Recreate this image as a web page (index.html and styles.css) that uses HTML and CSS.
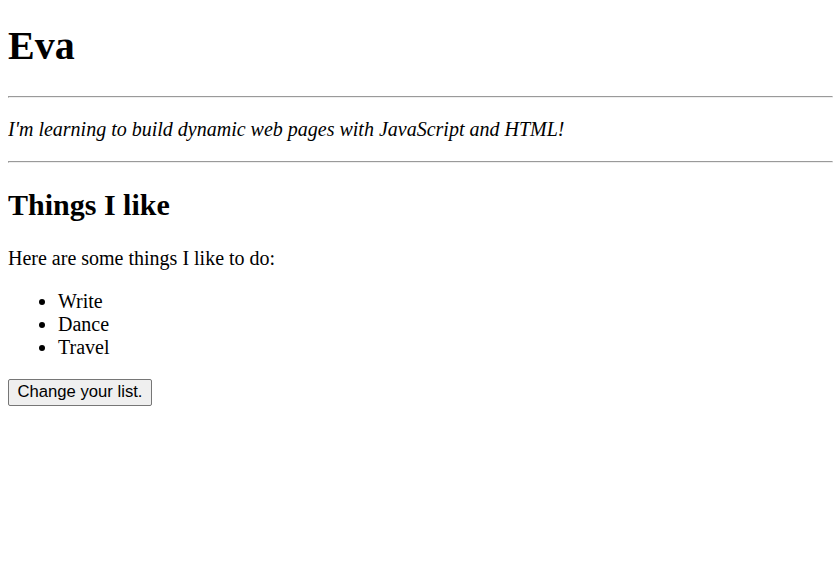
FILE: index.html
```html
<!DOCTYPE html>
<html>
<head>
<meta charset="utf-8">
<link rel="stylesheet" href="styles.css">
</head>
<body class="page">
<h1 class="title">Eva</h1>
<hr class="rule">
<p class="intro"><em>I'm learning to build dynamic web pages with JavaScript and HTML!</em></p>
<hr class="rule">
<h2 class="subtitle">Things I like</h2>
<p class="text">Here are some things I like to do:</p>
<ul class="list">
<li>Write</li>
<li>Dance</li>
<li>Travel</li>
</ul>
<button class="btn">Change your list.</button>
</body>
</html>
```
FILE: styles.css
```css
.page {
  margin: 0 0 10px 8px;
  font-family: "Liberation Serif", "Times New Roman", serif;
  font-size: 20px;
  color: #000;
  background: #fff;
}
.title {
  font-size: 40px;
  margin: 22px 0 26.8px;
}
.rule {
  margin: 10px 0;
  border: 1px inset;
  color: gray;
}
.intro,
.text {
  margin: 20px 0;
}
.subtitle {
  font-size: 30px;
  margin: 24.9px 0;
}
.list {
  margin: 20px 0;
  padding-left: 50px;
}
.btn {
  font-family: "Liberation Sans", Arial, sans-serif;
  font-size: 16.67px;
  padding: 2.5px 8.5px;
  margin: 0;
  color: #000;
  background: #efefef;
  border: 1px solid #767676;
  border-radius: 2px;
}
```
